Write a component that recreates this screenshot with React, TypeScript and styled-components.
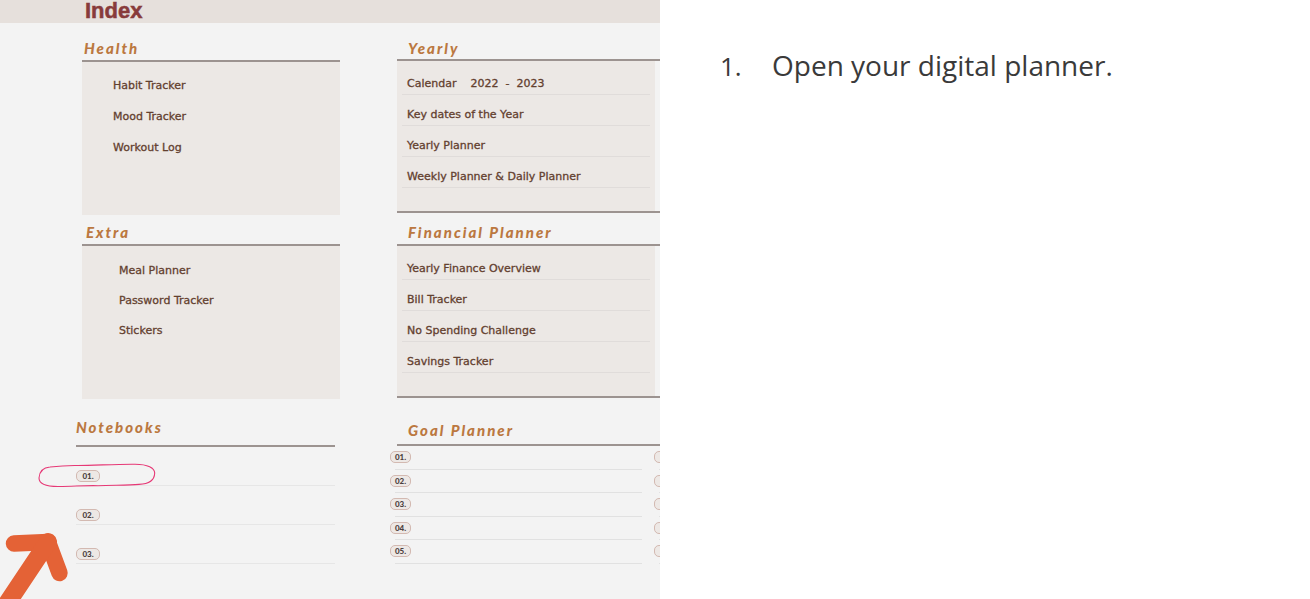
import React from "react";
import styled, { createGlobalStyle } from "styled-components";

const GlobalStyle = createGlobalStyle`
  *, *::before, *::after { box-sizing: border-box; }
  body { margin: 0; background: #fff; }
  h1, h2, p, ul, ol { margin: 0; padding: 0; }
  ul, ol { list-style: none; }
`;

const Page = styled.main`
  display: grid;
  grid-template-columns: minmax(0, 660fr) minmax(0, 650fr);
  min-height: 100vh;
`;

const Planner = styled.section`
  position: relative;
  overflow: hidden;
  background: #f3f3f3;
  font-family: "DejaVu Sans", Verdana, sans-serif;
`;

const Banner = styled.header`
  height: 23px;
  padding-left: 85px;
  background: #e6e0dc;
`;

const BannerTitle = styled.h1`
  color: #883b3b;
  font: 700 22px/22px "Liberation Sans", Arial, sans-serif;
  -webkit-text-stroke: 0.5px #883b3b;
`;

const Columns = styled.div`
  display: grid;
  grid-template-columns: minmax(0, 264fr) minmax(0, 270fr);
  column-gap: 50px;
  padding-left: 76px;
`;

const Inset = styled.section<{ $left: number }>`
  padding-left: ${(p) => p.$left}px;
`;

const Title = styled.h2<{ $height: number; $indent: number; $bottom?: number }>`
  display: flex;
  align-items: flex-end;
  height: ${(p) => p.$height}px;
  padding: 0 0 ${(p) => p.$bottom ?? 2}px ${(p) => p.$indent}px;
  color: #bb7840;
  font: italic 900 15px/20px Lato, sans-serif;
  letter-spacing: 2px;
  white-space: nowrap;
`;

const Rule = styled.div<{ $right?: number }>`
  height: 2px;
  margin-right: ${(p) => p.$right ?? 0}px;
  background: #9c9390;
`;

const Card = styled.ul<{ $indent: number; $row: number; $top: number }>`
  height: 153px;
  padding: ${(p) => p.$top}px 0 0 ${(p) => p.$indent}px;
  background: #ece8e5;

  li {
    color: #63402f;
    font-size: 11px;
    line-height: ${(p) => p.$row}px;
    -webkit-text-stroke: 0.3px #63402f;
  }
`;

const LinedCard = styled.ul`
  height: 150px;
  margin-right: 5px;
  padding: 3px 5px 0;
  background: #ece8e5;
`;

const LinedItem = styled.li`
  height: 31px;
  padding: 10px 0 0 5px;
  border-bottom: 1px solid #e0dcda;
  color: #63402f;
  font-size: 11px;
  line-height: 20px;
  white-space: pre;
  -webkit-text-stroke: 0.3px #63402f;
`;

const Badge = styled.span<{ $width: number }>`
  flex: none;
  width: ${(p) => p.$width}px;
  height: 12px;
  border: 1px solid #d3b9b1;
  border-radius: 5px;
  background: #ede8e5;
  color: #4b403e;
  font: 900 8px/10px Lato, sans-serif;
  text-align: center;
`;

const NotebookRow = styled.li`
  display: flex;
  align-items: flex-end;
  height: 39px;
  margin-right: 5px;
  padding-bottom: 3px;
  border-bottom: 1px solid #e6e6e6;
`;

const GoalList = styled.ol`
  display: grid;
  grid-template-rows: repeat(5, 1fr);
  height: 118px;
`;

const GoalRow = styled.li`
  display: grid;
  grid-template-columns: minmax(0, 1fr) 6px;
  column-gap: 12px;
`;

const GoalCell = styled.div`
  display: flex;
  min-width: 0;
  padding-top: 5px;
  background: linear-gradient(#e1e1e1, #e1e1e1) 5px 100% / 100% 1px no-repeat;
`;

const Marks = styled.svg`
  position: absolute;
  left: 0;
  top: 455px;
  width: 170px;
  height: 144px;
`;

const Steps = styled.ol`
  padding: 45px 60px;
  color: #3a3a3a;
  font-family: "Open Sans", sans-serif;
`;

const Step = styled.li`
  display: grid;
  grid-template-columns: 52px minmax(0, 1fr);
  align-items: baseline;
  font-size: 28px;
  line-height: 40px;
`;

const StepNumber = styled.span`
  font-size: 26px;
`;

const yearly = ["Calendar    2022  -  2023", "Key dates of the Year", "Yearly Planner", "Weekly Planner & Daily Planner"];
const financial = ["Yearly Finance Overview", "Bill Tracker", "No Spending Challenge", "Savings Tracker"];

function Lined({ items }: { items: string[] }) {
  return (
    <>
      <Rule />
      <LinedCard>
        {items.map((t) => (
          <LinedItem key={t}>{t}</LinedItem>
        ))}
      </LinedCard>
      <Rule />
    </>
  );
}

export default function App() {
  return (
    <Page>
      <GlobalStyle />
      <Planner>
        <Banner>
          <BannerTitle>Index</BannerTitle>
        </Banner>
        <Columns>
          <div>
            <Inset $left={6}>
              <Title $height={37} $indent={2}>Health</Title>
              <Rule />
              <Card $indent={31} $row={31} $top={8}>
                <li>Habit Tracker</li>
                <li>Mood Tracker</li>
                <li>Workout Log</li>
              </Card>
              <Title $height={29} $indent={4}>Extra</Title>
              <Rule />
              <Card $indent={37} $row={30} $top={10}>
                <li>Meal Planner</li>
                <li>Password Tracker</li>
                <li>Stickers</li>
              </Card>
            </Inset>
            <section>
              <Title $height={46} $indent={0} $bottom={8}>Notebooks</Title>
              <Rule $right={5} />
              <ol>
                {["01.", "02.", "03."].map((n) => (
                  <NotebookRow key={n}>
                    <Badge $width={24}>{n}</Badge>
                  </NotebookRow>
                ))}
              </ol>
            </section>
          </div>
          <div>
            <Inset $left={7}>
              <Title $height={36} $indent={11} $bottom={1}>Yearly</Title>
              <Lined items={yearly} />
              <Title $height={31} $indent={11}>Financial Planner</Title>
              <Lined items={financial} />
              <Title $height={46} $indent={11} $bottom={4}>Goal Planner</Title>
              <Rule />
            </Inset>
            <GoalList>
              {["01.", "02.", "03.", "04.", "05."].map((n) => (
                <GoalRow key={n}>
                  <GoalCell>
                    <Badge $width={21}>{n}</Badge>
                  </GoalCell>
                  <GoalCell>
                    <Badge $width={21} />
                  </GoalCell>
                </GoalRow>
              ))}
            </GoalList>
          </div>
        </Columns>
        <Marks viewBox="0 455 170 144" fill="none" aria-hidden="true">
          <path
            d="M39 478C39.500 471 43 467.500 50 467C60 465.800 68 465.300 78 465.500C95 465.500 115 464 135 464.200C148 464.200 154.500 468 154.700 473C154.500 480 149 484 139 484.400C128 485.500 112 485 98 485.700C84 485.300 72 486.600 58 486.500C46 486.500 39 483.500 39 478Z"
            stroke="#e63976"
            strokeWidth="1.100"
          />
          <g stroke="#e46236" strokeWidth="16.500" strokeLinecap="round" strokeLinejoin="round">
            <path d="M14 543.500L48 542L59.500 573" />
            <path d="M48 542L4 608" strokeWidth="18" />
          </g>
        </Marks>
      </Planner>
      <Steps>
        <Step>
          <StepNumber>1.</StepNumber>
          <span>Open your digital planner.</span>
        </Step>
      </Steps>
    </Page>
  );
}
